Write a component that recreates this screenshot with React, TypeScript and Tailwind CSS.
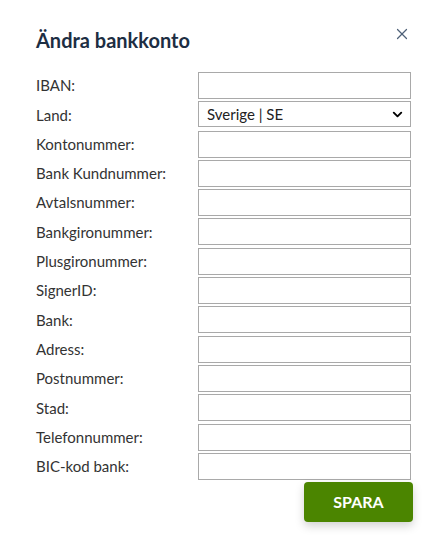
import { X, ChevronDown } from "lucide-react";

const fields = [
  "IBAN:",
  "Land:",
  "Kontonummer:",
  "Bank Kundnummer:",
  "Avtalsnummer:",
  "Bankgironummer:",
  "Plusgironummer:",
  "SignerID:",
  "Bank:",
  "Adress:",
  "Postnummer:",
  "Stad:",
  "Telefonnummer:",
  "BIC-kod bank:",
];

export default function App() {
  return (
    <div className="min-h-[545px] w-[448px] bg-white px-[36px] pt-[28px] font-['Lato','Noto_Sans',sans-serif] text-[#333]">
      <div className="flex items-start justify-between">
        <h2 className="text-[20px] font-bold leading-[24px] text-[#1d2e43]">Ändra bankkonto</h2>
        <button className="mr-[1px] mt-[-3px] text-[#4f6178]">
          <X className="h-[18px] w-[18px]" strokeWidth={1.6} />
        </button>
      </div>

      <form className="mt-[20px] grid grid-cols-[162px_213px] gap-y-[2.3px]">
        {fields.map((label) => (
          <div key={label} className="contents">
            <label className="flex h-[27px] items-center text-[15px]">{label}</label>
            {label === "Land:" ? (
              <div className="relative flex h-[26px] items-center border border-[#a9a9a9] pl-[8px] text-[15px] text-[#222]">
                Sverige | SE
                <ChevronDown className="absolute right-[5px] h-[15px] w-[15px] text-black" strokeWidth={3} />
              </div>
            ) : (
              <input type="text" className="h-[27px] border border-[#a9a9a9] px-2 text-[15px] outline-none" />
            )}
          </div>
        ))}
      </form>

      <div className="mt-[2px] flex justify-end">
        <button className="mr-[-1px] h-[40px] w-[109px] rounded-[4px] bg-[#4b8500] text-[16px] font-bold text-white shadow-[0_4px_10px_rgba(0,0,0,0.18)]">
          SPARA
        </button>
      </div>
    </div>
  );
}
